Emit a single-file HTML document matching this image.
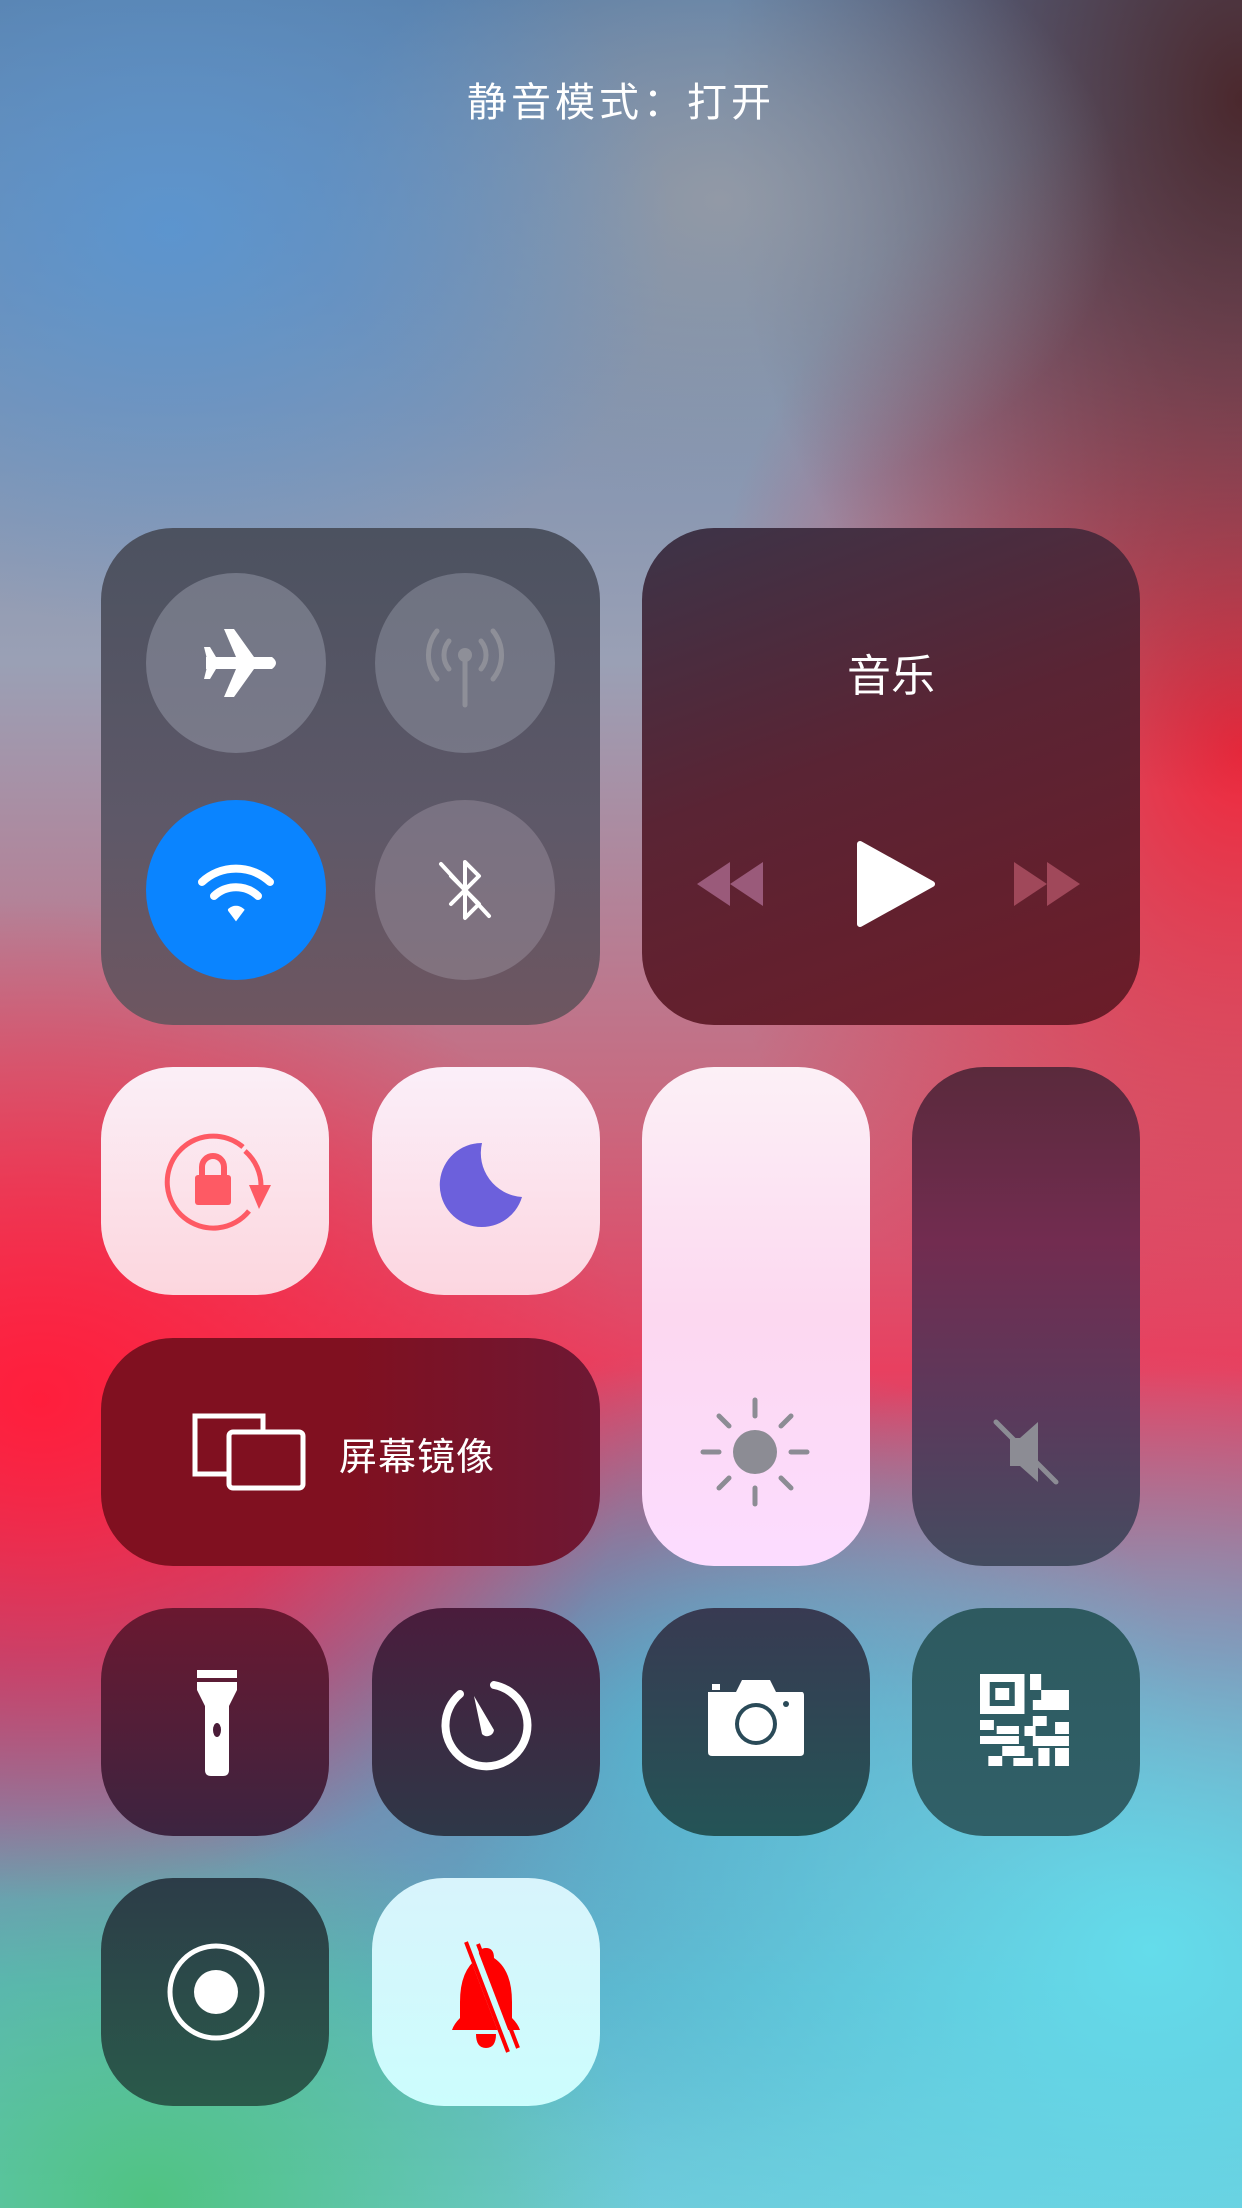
<!DOCTYPE html>
<html><head><meta charset="utf-8">
<style>
html,body{margin:0;padding:0}
body{width:1242px;height:2208px;position:relative;overflow:hidden;font-family:"Liberation Sans","Noto Sans CJK SC",sans-serif;
background:
radial-gradient(ellipse 500px 400px at 170px 230px,rgba(90,150,210,0.9),rgba(90,150,210,0) 100%),
radial-gradient(ellipse 400px 300px at 720px 200px,rgba(150,155,165,0.9),rgba(150,155,165,0) 100%),
radial-gradient(ellipse 520px 700px at 1242px 100px,rgba(75,40,45,1),rgba(75,40,45,0) 100%),
radial-gradient(ellipse 550px 650px at 1242px 750px,rgba(240,40,60,1),rgba(240,40,60,0) 100%),
radial-gradient(ellipse 600px 500px at 40px 1400px,rgba(255,30,60,1),rgba(255,30,60,0) 100%),
radial-gradient(ellipse 700px 600px at 1150px 1950px,rgba(100,220,235,1),rgba(100,220,235,0) 100%),
radial-gradient(ellipse 500px 400px at 150px 2200px,rgba(80,195,130,1),rgba(80,195,130,0) 100%),
radial-gradient(ellipse 500px 400px at 700px 1750px,rgba(80,170,200,1),rgba(80,170,200,0) 100%),
linear-gradient(180deg,#5a7fa8 0%,#9aa0b5 30%,#c86a80 50%,#e84060 62%,#9a6090 75%,#60b0c8 90%,#70c8d8 100%);}
.t{position:absolute;border-radius:72px;overflow:hidden}
.t svg{position:absolute;left:0;top:0}
.title{position:absolute;top:70px;left:0;width:1242px;text-align:center;color:#fff;font-size:40px;letter-spacing:4px}
.c{position:absolute;width:180px;height:180px;border-radius:50%}
</style></head><body>
<div class="title">静音模式：打开</div>

<div class="t" style="left:101px;top:528px;width:499px;height:497px;background:linear-gradient(180deg,#4c5260,#5e5868 60%,#6e5660);"></div>
<div class="c" style="left:146px;top:573px;background:rgba(160,165,180,0.45)"></div>
<div class="c" style="left:375px;top:573px;background:rgba(160,165,180,0.4)"></div>
<div class="c" style="left:146px;top:800px;background:#0a84ff"></div>
<div class="c" style="left:375px;top:800px;background:rgba(165,155,170,0.4)"></div>
<svg style="position:absolute;left:0;top:0" width="1242" height="1100">
 <g transform="translate(240,663)" fill="#fff">
  <path d="M-34 -6 L-4 -6 L-16 -34 L-6 -34 L14 -6 L32 -6 Q40 0 32 6 L14 6 L-6 34 L-16 34 L-4 6 L-34 6 Z"/>
  <path d="M-36 -16 L-30 -16 L-24 -6 L-24 6 L-30 16 L-36 16 L-32 0 Z"/>
 </g>
 <g transform="translate(465,655)" fill="none" stroke="#8e8f98" stroke-width="5" stroke-linecap="round">
  <circle cx="0" cy="0" r="7" fill="#8e8f98" stroke="none"/>
  <line x1="0" y1="4" x2="0" y2="50"/>
  <path d="M-16 -14 A22 22 0 0 0 -16 14"/><path d="M16 -14 A22 22 0 0 1 16 14"/>
  <path d="M-28 -24 A38 38 0 0 0 -28 24"/><path d="M28 -24 A38 38 0 0 1 28 24"/>
 </g>
 <g transform="translate(236,912)" fill="none" stroke="#fff" stroke-width="8" stroke-linecap="round">
  <path d="M-34 -30 A50 50 0 0 1 34 -30"/>
  <path d="M-22 -16 A32 32 0 0 1 22 -16"/>
  <path d="M-6 -2 L0 6 L6 -2 A9 9 0 0 0 -6 -2" fill="#fff" stroke-width="4"/>
 </g>
 <g transform="translate(465,890)" fill="none" stroke="#fff" stroke-width="4" stroke-linecap="round" stroke-linejoin="round">
  <path d="M-14 -14 L14 14 L0 28 L0 -28 L14 -14 L-14 14"/>
  <line x1="-24" y1="-26" x2="24" y2="26"/>
 </g>
</svg>

<div class="t" style="left:642px;top:528px;width:498px;height:497px;background:linear-gradient(160deg,#3c3448,#5a2434 45%,#6c1c28);"></div>
<div style="position:absolute;left:642px;top:640px;width:498px;text-align:center;color:#fff;font-size:44px">音乐</div>
<svg style="position:absolute;left:642px;top:820px" width="498" height="130">
 <g fill="#9a5a7a"><path d="M55 64 L88 42 L88 86 Z"/><path d="M88 64 L121 42 L121 86 Z"/></g>
 <path d="M218 24 L290 64 L218 104 Z" fill="#fff" stroke="#fff" stroke-width="6" stroke-linejoin="round"/>
 <g fill="#a0485a"><path d="M372 42 L405 64 L372 86 Z"/><path d="M405 42 L438 64 L405 86 Z"/></g>
</svg>

<div class="t" style="left:101px;top:1067px;width:228px;height:228px;background:linear-gradient(180deg,#fbeff7,#fcd6de);">
 <svg width="228" height="228"><g transform="translate(114,114)">
  <path d="M28 -34 A46 46 0 1 0 34 30" fill="none" stroke="#fe5a64" stroke-width="5"/>
  <path d="M30 -30 A46 46 0 0 1 46 6" fill="none" stroke="#fe5a64" stroke-width="5"/>
  <path d="M34 4 L56 4 L44 28 Z" fill="#fe5a64"/>
  <rect x="-20" y="-6" width="36" height="30" rx="3" fill="#fe5a64"/>
  <path d="M-13 -6 L-13 -14 A11 11 0 0 1 9 -14 L9 -6" fill="none" stroke="#fe5a64" stroke-width="6"/>
 </g></svg>
</div>
<div class="t" style="left:372px;top:1067px;width:228px;height:228px;background:linear-gradient(180deg,#fbeff9,#fcd6e0);">
 <svg width="228" height="228"><path d="M110 76 A42 42 0 1 0 150 130 A44 44 0 0 1 110 76 Z" fill="#6c60dc"/></svg>
</div>
<div class="t" style="left:642px;top:1067px;width:228px;height:499px;background:linear-gradient(180deg,#fcf0f6,#fcd8f0 50%,#fcdcff);">
 <svg width="228" height="499"><g transform="translate(113,385)" stroke="#8c8c94" stroke-width="5" stroke-linecap="round">
  <circle r="22" fill="#8c8c94" stroke="none"/>
  <line y1="-36" y2="-52"/><line y1="36" y2="52"/><line x1="-36" x2="-52"/><line x1="36" x2="52"/>
  <line x1="-26" y1="-26" x2="-36" y2="-36"/><line x1="26" y1="-26" x2="36" y2="-36"/><line x1="-26" y1="26" x2="-36" y2="36"/><line x1="26" y1="26" x2="36" y2="36"/>
 </g></svg>
</div>
<div class="t" style="left:912px;top:1067px;width:228px;height:499px;background:linear-gradient(180deg,#5a2a3c,#722c50 35%,#5a3a5c 70%,#444c60);">
 <svg width="228" height="499"><g transform="translate(114,385)">
  <path d="M-16 -14 L-6 -14 L12 -30 L12 30 L-6 14 L-16 14 Z" fill="#8c8c94"/>
  <line x1="-30" y1="-30" x2="30" y2="30" stroke="#8c8c94" stroke-width="5" stroke-linecap="round"/>
 </g></svg>
</div>
<div class="t" style="left:101px;top:1338px;width:499px;height:228px;background:linear-gradient(90deg,#801020 50%,#6e1834);">
 <svg width="499" height="228"><g fill="none" stroke="#fff" stroke-width="5">
  <path d="M126 136 L94 136 L94 78 L162 78 L162 94"/>
  <rect x="128" y="94" width="74" height="56" rx="4"/>
 </g></svg>
 <div style="position:absolute;left:238px;top:88px;color:#fff;font-size:38px;letter-spacing:1px">屏幕镜像</div>
</div>

<div class="t" style="left:101px;top:1608px;width:228px;height:228px;background:linear-gradient(180deg,#6a1830,#3c2440);">
 <svg width="228" height="228"><g fill="#fff">
  <rect x="96" y="62" width="40" height="8"/>
  <path d="M96 74 L136 74 L136 82 Q130 94 128 98 L128 162 Q128 168 122 168 L110 168 Q104 168 104 162 L104 98 Q102 94 96 82 Z"/>
  <ellipse cx="116" cy="122" rx="4" ry="7" fill="#4a1c38"/>
 </g></svg>
</div>
<div class="t" style="left:372px;top:1608px;width:228px;height:228px;background:linear-gradient(180deg,#4a1c3c,#2e3848);">
 <svg width="228" height="228"><g transform="translate(114,118)">
  <path d="M8 -41 A41 41 0 1 1 -26 -32" fill="none" stroke="#fff" stroke-width="8" stroke-linecap="round"/>
  <path d="M-12 -30 L8 4 A7 7 0 0 1 -4 8 Z" fill="#fff"/>
 </g></svg>
</div>
<div class="t" style="left:642px;top:1608px;width:228px;height:228px;background:linear-gradient(180deg,#383a52,#245456);">
 <svg width="228" height="228"><g transform="translate(114,114)">
  <path d="M-48 -30 L-20 -30 L-14 -42 L14 -42 L20 -30 L46 -30 Q48 -30 48 -26 L48 30 Q48 34 44 34 L-44 34 Q-48 34 -48 30 Z" fill="#fff"/>
  <rect x="-44" y="-38" width="8" height="6" fill="#fff"/>
  <circle cx="0" cy="2" r="21" fill="#2a4a58"/><circle cx="0" cy="2" r="17" fill="#fff"/>
  <circle cx="30" cy="-18" r="3" fill="#2a4a58"/>
 </g></svg>
</div>
<div class="t" style="left:912px;top:1608px;width:228px;height:228px;background:linear-gradient(180deg,#2e5a60,#306068);">
 <svg width="228" height="228"><g fill="#fff" transform="translate(68,0) scale(1.39,1) translate(-68,0)">
  <path fill-rule="evenodd" d="M68 66 L100 66 L100 106 L68 106 Z M75 74 L75 98 L93 98 L93 74 Z"/>
  <rect x="79" y="80" width="10" height="12"/>
  <rect x="104" y="66" width="8" height="16"/><rect x="112" y="82" width="20" height="10"/>
  <rect x="106" y="92" width="26" height="10"/><rect x="106" y="108" width="10" height="10"/>
  <rect x="122" y="114" width="10" height="12"/><rect x="68" y="112" width="10" height="10"/>
  <rect x="80" y="118" width="16" height="8"/><rect x="68" y="128" width="28" height="8"/>
  <rect x="84" y="138" width="16" height="10"/><rect x="74" y="148" width="10" height="10"/>
  <rect x="92" y="150" width="14" height="8"/><rect x="106" y="128" width="26" height="10"/>
  <rect x="110" y="140" width="8" height="18"/><rect x="122" y="140" width="10" height="18"/>
  <rect x="100" y="118" width="8" height="10"/>
 </g></svg>
</div>

<div class="t" style="left:101px;top:1878px;width:228px;height:228px;background:linear-gradient(180deg,#2c3c48,#2a5a4a);">
 <svg width="228" height="228"><circle cx="115" cy="114" r="46" fill="none" stroke="#fff" stroke-width="5"/><circle cx="115" cy="114" r="22" fill="#fff"/></svg>
</div>
<div class="t" style="left:372px;top:1878px;width:228px;height:228px;background:linear-gradient(180deg,#d8f4fc,#ccfdfd);">
 <svg width="228" height="228"><g fill="#ff0000">
  <path d="M114 70 Q122 70 122 80 Q140 92 140 124 L140 140 Q146 146 148 152 L80 152 Q82 146 88 140 L88 124 Q88 92 106 80 Q106 70 114 70 Z"/>
  <path d="M104 156 L124 156 Q124 170 114 170 Q104 170 104 156 Z"/>
 </g>
 <line x1="98" y1="66" x2="140" y2="176" stroke="#ccfdfd" stroke-width="10"/>
 <line x1="94" y1="64" x2="136" y2="174" stroke="#ff0000" stroke-width="4"/>
 <line x1="106" y1="66" x2="146" y2="170" stroke="#ff0000" stroke-width="4"/>
 </svg>
</div>
</body></html>
